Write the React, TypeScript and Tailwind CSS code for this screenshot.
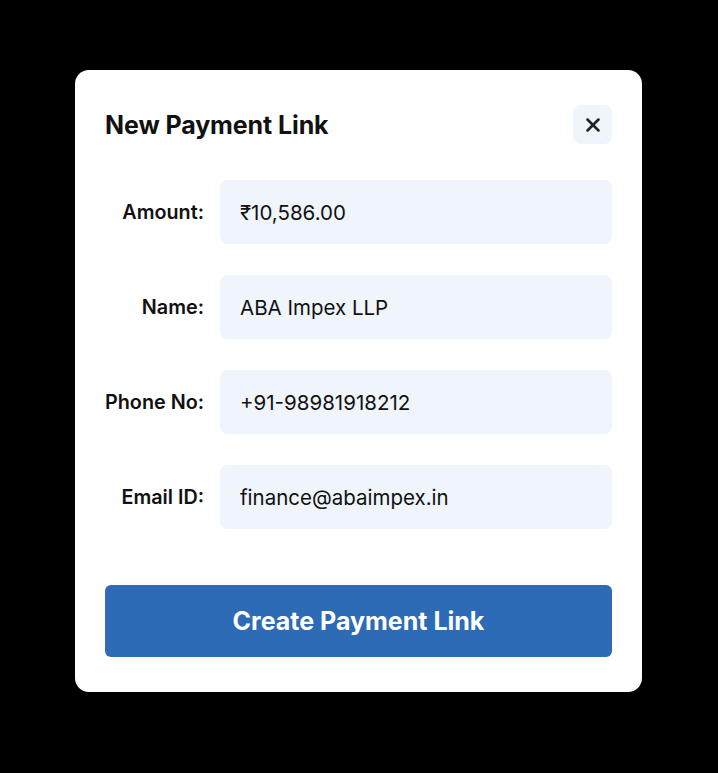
import { X } from "lucide-react";

const fields = [
  { label: "Amount:", value: "₹10,586.00" },
  { label: "Name:", value: "ABA Impex LLP" },
  { label: "Phone No:", value: "+91-98981918212" },
  { label: "Email ID:", value: "finance@abaimpex.in" },
];

export default function App() {
  return (
    <div
      className="w-[718px] h-[773px] bg-black pt-[70px] pl-[75px]"
      style={{ fontFamily: "Inter, 'Noto Sans', sans-serif" }}
    >
      <div className="w-[567px] h-[622px] bg-white rounded-[14px] px-[30px] pt-[35px]">
        <div className="flex items-center justify-between h-[39px]">
          <h2 className="text-[25px] font-bold text-[#111] tracking-[-0.1px] pt-[2px]">New Payment Link</h2>
          <button className="w-[39px] h-[39px] rounded-[8px] bg-[#f0f4fb] flex items-center justify-center">
            <X size={22} strokeWidth={2.8} className="text-[#222]" />
          </button>
        </div>

        <div className="mt-[36px] flex flex-col gap-[31px]">
          {fields.map((f) => (
            <div key={f.label} className="flex items-center gap-[16px]">
              <label className="w-[99px] text-right text-[19.8px] font-semibold text-[#111] shrink-0 whitespace-nowrap pt-[2px]">
                {f.label}
              </label>
              <div className="flex-1 h-[64px] rounded-[8px] bg-[#f0f4fb] flex items-center px-[20px] pt-[2px] text-[20.5px] text-[#111]">
                {f.value}
              </div>
            </div>
          ))}
        </div>

        <button className="mt-[56px] w-full h-[72px] rounded-[6px] bg-[#2d6bb6] text-white text-[25px] font-bold pt-[2px]">
          Create Payment Link
        </button>
      </div>
    </div>
  );
}
